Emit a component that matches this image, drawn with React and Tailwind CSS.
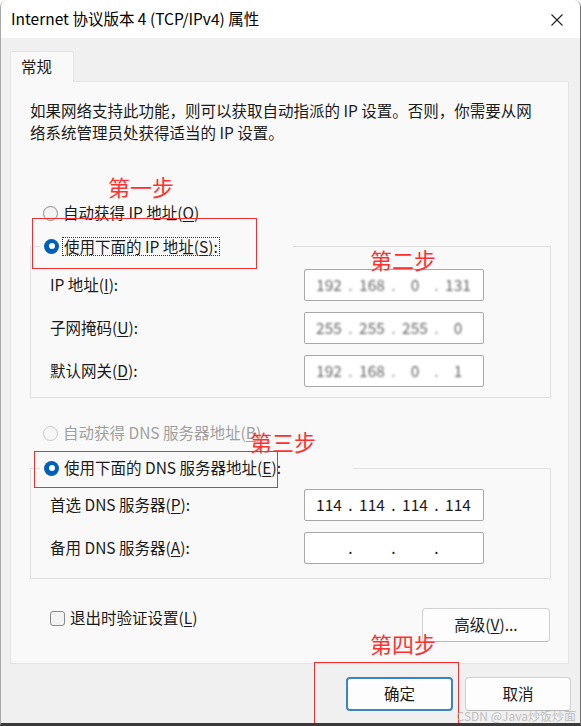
import React from "react";

const font = { fontFamily: '"Noto Sans CJK SC", "Noto Sans", sans-serif' };

function Radio({ checked, disabled }) {
  if (checked) {
    return (
      <span className="w-[15px] h-[15px] rounded-full bg-[#005fb8] flex items-center justify-center shrink-0">
        <span className="w-[6px] h-[6px] rounded-full bg-white" />
      </span>
    );
  }
  return (
    <span
      className={`w-[15px] h-[15px] rounded-full border shrink-0 ${
        disabled ? "border-[#c8c8c8] bg-[#f7f7f7]" : "border-[#8a8a8a] bg-[#f3f3f3]"
      }`}
    />
  );
}

// access key letter, underlined
const K = ({ children }) => <span className="underline underline-offset-2">{children}</span>;

function IpBox({ parts, blurred }) {
  return (
    <div className="w-[180px] h-[32px] bg-white border border-[#a8a8a8] rounded-[2px] flex items-center pl-[7px]">
      {parts.map((p, i) => (
        <React.Fragment key={i}>
          <span className={`w-[34px] text-center ${blurred ? "blur-[1.3px] text-[#666]" : ""}`}>{p}</span>
          {i < 3 && <span className={`w-[9px] text-center ${blurred ? "blur-[1px] text-[#999]" : ""}`}>.</span>}
        </React.Fragment>
      ))}
    </div>
  );
}

function Row({ label, children }) {
  return (
    <div className="flex items-center h-[32px]">
      <div className="w-[254px] text-[#1a1a1a]">{label}</div>
      {children}
    </div>
  );
}

const Note = ({ className, children }) => (
  <div className={`absolute text-[22px] leading-none text-[#ff3030] ${className}`}>{children}</div>
);

export default function App() {
  return (
    <div
      style={font}
      className="relative w-[581px] h-[726px] bg-[#f0f0f0] border-l border-l-[#a8a8a8] border-r border-r-[#707070] border-b-[3px] border-b-[#3a3a3a] rounded-t-[7px] overflow-hidden text-[15.5px] text-[#1a1a1a]"
    >
      {/* title bar */}
      <div className="h-[38px] bg-white flex items-center justify-between pl-[10px] pr-[16px]">
        <div className="text-[15.5px] text-black">Internet 协议版本 4 (TCP/IPv4) 属性</div>
        <svg width="14" height="14" viewBox="0 0 14 14" className="mt-[2px]">
          <path d="M1.5 1.5 L12.5 12.5 M12.5 1.5 L1.5 12.5" stroke="#222" strokeWidth="1.1" />
        </svg>
      </div>

      <div className="pl-[9px] pr-[11px] pt-[13px]">
        {/* tab */}
        <div className="relative z-10 w-[64px] h-[31px] -mb-px bg-[#f9f9f9] border border-b-0 border-[#e3e3e3] rounded-t-[2px] pl-[10px] pt-[3px]">
          常规
        </div>

        {/* panel */}
        <div className="border border-[#e3e3e3] bg-[#f9f9f9] pl-[19px] pr-[16px] pt-[17px] pb-[21px]">
          <p className="leading-[22px] pr-[10px]">
            如果网络支持此功能，则可以获取自动指派的 IP 设置。否则，你需要从网络系统管理员处获得适当的 IP 设置。
          </p>

          <div className="mt-[59px] ml-[13px] h-[22px] flex items-center gap-[5px]">
            <Radio />
            <span>
              自动获得 IP 地址(<K>O</K>)
            </span>
          </div>

          <fieldset className="mt-[11px] w-[521px] border border-[#e0e0e0]">
            <legend className="ml-[9px] w-[253px] h-[22px] flex items-center gap-[4px] pl-[4px]">
              <Radio checked />
              <span className="outline outline-1 outline-dotted outline-[#333] px-[1px] leading-[17px]">
                使用下面的 IP 地址(<K>S</K>):
              </span>
            </legend>
            <div className="pl-[19px] pt-[12px] pb-[10px] flex flex-col gap-[11px]">
              <Row label={<>IP 地址(<K>I</K>):</>}>
                <IpBox parts={["192", "168", "0", "131"]} blurred />
              </Row>
              <Row label={<>子网掩码(<K>U</K>):</>}>
                <IpBox parts={["255", "255", "255", "0"]} blurred />
              </Row>
              <Row label={<>默认网关(<K>D</K>):</>}>
                <IpBox parts={["192", "168", "0", "1"]} blurred />
              </Row>
            </div>
          </fieldset>

          <div className="mt-[24px] ml-[13px] h-[22px] flex items-center gap-[5px] text-[#a0a0a0]">
            <Radio disabled />
            <span>
              自动获得 DNS 服务器地址(<K>B</K>)
            </span>
          </div>

          <fieldset className="mt-[13px] w-[521px] border border-[#e0e0e0]">
            <legend className="ml-[9px] w-[313px] h-[22px] flex items-center gap-[4px] pl-[4px]">
              <Radio checked />
              <span className="px-[1px]">
                使用下面的 DNS 服务器地址(<K>E</K>):
              </span>
            </legend>
            <div className="pl-[19px] pt-[10px] pb-[14px] flex flex-col gap-[11px]">
              <Row label={<>首选 DNS 服务器(<K>P</K>):</>}>
                <IpBox parts={["114", "114", "114", "114"]} />
              </Row>
              <Row label={<>备用 DNS 服务器(<K>A</K>):</>}>
                <IpBox parts={["", "", "", ""]} />
              </Row>
            </div>
          </fieldset>

          <div className="mt-[28px] flex items-start justify-between">
            <div className="ml-[20px] h-[22px] flex items-center gap-[5px]">
              <span className="w-[15px] h-[15px] rounded-[3px] border border-[#8a8a8a] bg-[#f3f3f3]" />
              <span>
                退出时验证设置(<K>L</K>)
              </span>
            </div>
            <button className="mt-[1px] mr-[2px] w-[128px] h-[34px] bg-[#fdfdfd] border border-[#d0d0d0] border-b-[#b8b8b8] rounded-[4px]">
              高级(<K>V</K>)...
            </button>
          </div>
        </div>

        {/* dialog buttons */}
        <div className="mt-[13px] flex justify-end gap-[12px] pr-[-2px]">
          <button className="w-[107px] h-[34px] bg-[#fdfdfd] border-2 border-[#3b82c8] rounded-[4px]">确定</button>
          <button className="w-[106px] h-[34px] bg-[#fdfdfd] border border-[#d0d0d0] border-b-[#b8b8b8] rounded-[4px] -mr-[2px]">
            取消
          </button>
        </div>
      </div>

      {/* red annotations */}
      <Note className="left-[107px] top-[175px]">第一步</Note>
      <div className="absolute left-[31px] top-[218px] w-[225px] h-[51px] border border-[#f03030]" />
      <Note className="left-[369px] top-[248px]">第二步</Note>
      <Note className="left-[249px] top-[430px]">第三步</Note>
      <div className="absolute left-[33px] top-[451px] w-[244px] h-[37px] border border-[#f03030]" />
      <Note className="left-[369px] top-[632px]">第四步</Note>
      <div className="absolute left-[313px] top-[662px] w-[145px] h-[70px] border border-[#f03030]" />

      {/* watermark */}
      <div className="absolute right-[4px] top-[707px] text-[12px] text-[#b0b0b0]/80">CSDN @Java炒饭炒面</div>
    </div>
  );
}
